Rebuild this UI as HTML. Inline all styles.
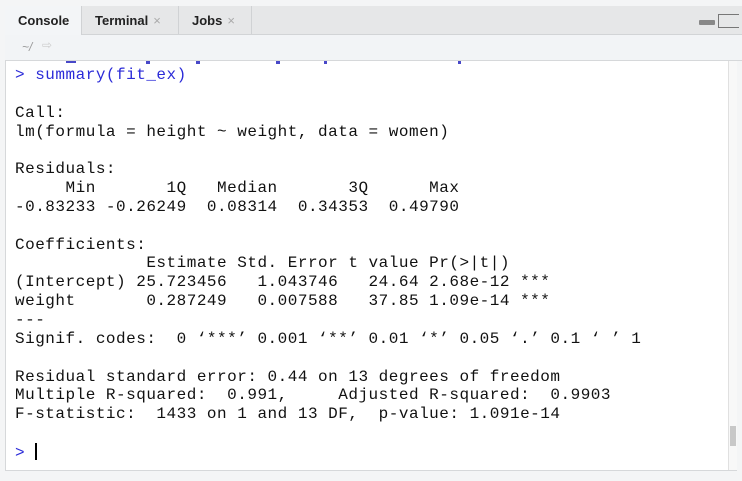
<!DOCTYPE html>
<html><head><style>
body{margin:0;width:742px;height:481px;background:#f4f5f6;position:relative;overflow:hidden;font-family:"Liberation Sans",sans-serif}
.tabs{position:absolute;left:5px;top:6px;width:737px;height:28px;background:#e6e7e8;border-bottom:1px solid #d2d4d6}
.tab{position:absolute;top:0;height:28px;line-height:29px;font-size:13px;font-weight:bold;color:#222;padding-left:13px;box-sizing:border-box;border-right:1px solid #d0d2d4}
.tab .x{color:#aaa;font-weight:normal;font-size:13px;margin-left:5px}
.tool{position:absolute;left:5px;top:35px;width:737px;height:25px;background:#f2f4f6;border-bottom:1px solid #d6d8da}
.con{position:absolute;left:5px;top:61px;width:731px;height:409px;background:#fff;border-left:1px solid #d6d8da;border-bottom:1px solid #d6d8da}
pre{position:absolute;left:9px;top:5px;margin:0;font-family:"Liberation Mono",monospace;font-size:16px;letter-spacing:0.5px;line-height:18.85px;color:#111}
.b{color:#2b2bd8}
.sb{position:absolute;left:728px;top:61px;width:8px;height:409px;background:#f8f8f8;border-left:1px solid #e0e0e0}
.m{position:absolute;top:0;height:2px;background:#4848c8}
</style></head><body>
<div class="tabs">
<div class="tab" style="left:0;width:77px;background:#f3f5f7;height:29px">Console</div>
<div class="tab" style="left:77px;width:97px">Terminal<span class="x">×</span></div>
<div class="tab" style="left:174px;width:73px">Jobs<span class="x">×</span></div>
<div style="position:absolute;left:694px;top:14px;width:16px;height:5px;background:#888;border-radius:1px"></div>
<div style="position:absolute;left:713px;top:8px;width:20px;height:12px;border:1.5px solid #777;border-right:none"></div>
</div>
<div class="tool"><span style="position:absolute;left:17px;top:5px;font-size:12px;color:#999;font-style:italic">~/</span><span style="position:absolute;left:37px;top:3px;font-size:12px;color:#ccc">⇨</span></div>
<div class="con">
<div class="m" style="left:60px;width:10px"></div>
<div class="m" style="left:140px;width:4px;height:3px"></div>
<div class="m" style="left:190px;width:4px;height:3px"></div>
<div class="m" style="left:270px;width:4px;height:3px"></div>
<div class="m" style="left:318px;width:3px;height:3px"></div>
<div class="m" style="left:452px;width:3px;height:3px"></div>
<pre><span class="b">&gt; summary(fit_ex)</span>

Call:
lm(formula = height ~ weight, data = women)

Residuals:
     Min       1Q   Median       3Q      Max 
-0.83233 -0.26249  0.08314  0.34353  0.49790 

Coefficients:
             Estimate Std. Error t value Pr(&gt;|t|)    
(Intercept) 25.723456   1.043746   24.64 2.68e-12 ***
weight       0.287249   0.007588   37.85 1.09e-14 ***
---
Signif. codes:  0 ‘***’ 0.001 ‘**’ 0.01 ‘*’ 0.05 ‘.’ 0.1 ‘ ’ 1

Residual standard error: 0.44 on 13 degrees of freedom
Multiple R-squared:  0.991,	Adjusted R-squared:  0.9903 
F-statistic:  1433 on 1 and 13 DF,  p-value: 1.091e-14

<span class="b">&gt; </span><span style="display:inline-block;width:2px;height:17px;background:#000;vertical-align:-3px"></span></pre>
</div>
<div class="sb"><div style="position:absolute;left:1px;top:365px;width:6px;height:20px;background:#c8c8c8"></div></div>
</body></html>
